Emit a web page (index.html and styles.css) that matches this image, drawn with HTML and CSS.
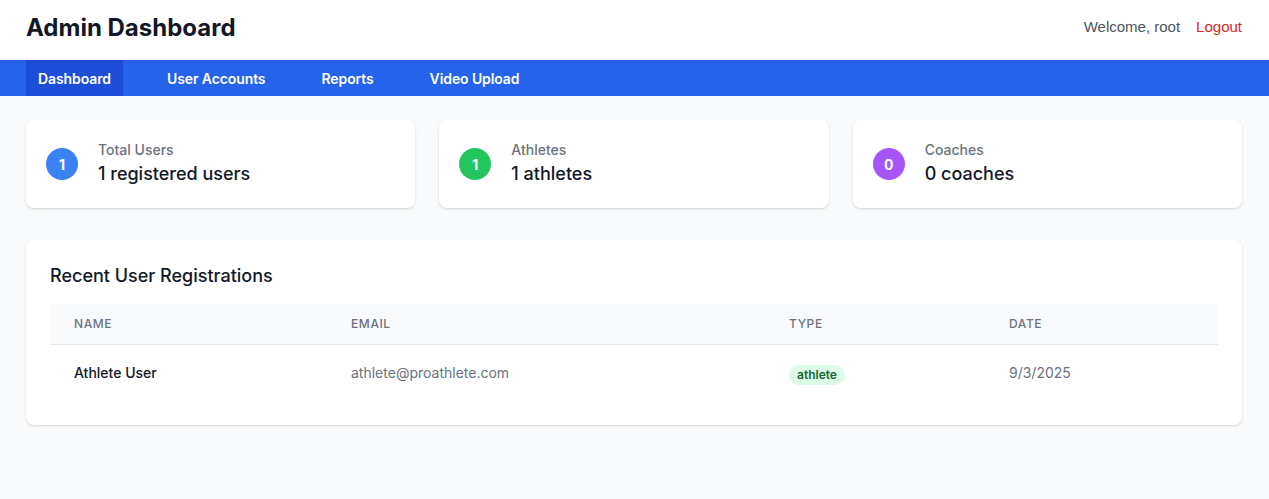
FILE: index.html
```html
<!DOCTYPE html>
<html>
<head>
<meta charset="utf-8">
<link rel="stylesheet" href="styles.css">
</head>
<body>
<header class="topbar">
  <div class="container topbar-inner">
    <h1 class="title">Admin Dashboard</h1>
    <div class="user-area">
      <span class="welcome">Welcome, root</span>
      <button class="logout">Logout</button>
    </div>
  </div>
</header>
<nav class="nav">
  <div class="container nav-inner">
    <a class="nav-item active">Dashboard</a>
    <a class="nav-item">User Accounts</a>
    <a class="nav-item">Reports</a>
    <a class="nav-item">Video Upload</a>
  </div>
</nav>
<main class="container main">
  <div class="stats">
    <div class="card stat">
      <div class="dot blue">1</div>
      <div class="stat-text">
        <div class="stat-label">Total Users</div>
        <div class="stat-value">1 registered users</div>
      </div>
    </div>
    <div class="card stat">
      <div class="dot green">1</div>
      <div class="stat-text">
        <div class="stat-label">Athletes</div>
        <div class="stat-value">1 athletes</div>
      </div>
    </div>
    <div class="card stat">
      <div class="dot purple">0</div>
      <div class="stat-text">
        <div class="stat-label">Coaches</div>
        <div class="stat-value">0 coaches</div>
      </div>
    </div>
  </div>
  <div class="card recent">
    <h2 class="recent-title">Recent User Registrations</h2>
    <table class="table">
      <thead>
        <tr>
          <th class="c1">Name</th>
          <th class="c2">Email</th>
          <th class="c3">Type</th>
          <th class="c4">Date</th>
        </tr>
      </thead>
      <tbody>
        <tr>
          <td class="name">Athlete User</td>
          <td class="muted">athlete@proathlete.com</td>
          <td><span class="badge">athlete</span></td>
          <td class="muted">9/3/2025</td>
        </tr>
      </tbody>
    </table>
  </div>
</main>
</body>
</html>
```
FILE: styles.css
```css
* { box-sizing: border-box; }
html, body { margin: 0; padding: 0; }
body {
  background: #f9fafb;
  font-family: Inter, "Noto Sans", sans-serif;
  color: #111827;
}
.container { padding: 0 27px 0 26px; }
.topbar {
  background: #fff;
  box-shadow: 0 1px 2px rgba(0,0,0,0.06);
  position: relative;
  z-index: 1;
}
.topbar-inner {
  height: 60px;
  display: flex;
  align-items: center;
  justify-content: space-between;
}
.title {
  margin: 0;
  font-size: 24px;
  font-weight: 700;
  line-height: 32px;
  color: #111827;
  position: relative;
  top: -2px;
}
.user-area {
  display: flex;
  align-items: center;
  gap: 16px;
  font-family: "Liberation Sans", Arial, sans-serif;
  font-size: 15px;
  position: relative;
  top: -4px;
}
.welcome { color: #4b5563; }
.logout {
  border: none;
  background: none;
  padding: 0;
  font: inherit;
  color: #dc2626;
}
.nav { background: #2563eb; }
.nav-inner {
  display: flex;
  gap: 32px;
  height: 36px;
}
.nav-item {
  display: flex;
  align-items: center;
  padding: 0 12px;
  color: #fff;
  font-size: 14px;
  font-weight: 600;
  letter-spacing: -0.1px;
}
.nav-item.active { background: #1d4ed8; }
.main { padding-top: 24px; padding-bottom: 24px; }
.card {
  background: #fff;
  border-radius: 8px;
  box-shadow: 0 1px 3px rgba(0,0,0,0.1), 0 1px 2px rgba(0,0,0,0.06);
}
.stats {
  display: grid;
  grid-template-columns: repeat(3, 1fr);
  gap: 24px;
}
.stat {
  display: flex;
  align-items: center;
  padding: 20px;
}
.dot {
  width: 32px;
  height: 32px;
  border-radius: 50%;
  color: #fff;
  font-size: 14px;
  font-weight: 700;
  display: flex;
  align-items: center;
  justify-content: center;
  flex-shrink: 0;
}
.blue { background: #3b82f6; }
.green { background: #22c55e; }
.purple { background: #a855f7; }
.stat-text { margin-left: 20px; }
.stat-label {
  font-size: 14px;
  line-height: 20px;
  color: #6b7280;
  font-weight: 500;
}
.stat-value {
  font-size: 18px;
  line-height: 28px;
  font-weight: 500;
  color: #111827;
}
.recent {
  margin-top: 32px;
  padding: 24px;
}
.recent-title {
  margin: 0 0 16px;
  font-size: 18px;
  line-height: 24px;
  font-weight: 500;
  color: #111827;
}
.table {
  width: 100%;
  border-collapse: collapse;
  table-layout: fixed;
}
.c1 { width: 277px; }
.c2 { width: 438px; }
.c3 { width: 220px; }
thead tr { background: #f9fafb; border-bottom: 1px solid #e5e7eb; }
th {
  text-align: left;
  padding: 0 24px;
  height: 40px;
  font-size: 12px;
  font-weight: 500;
  color: #6b7280;
  text-transform: uppercase;
  letter-spacing: 0.05em;
}
td {
  padding: 16px 24px;
  font-size: 14px;
  line-height: 20px;
  height: 57px;
  white-space: nowrap;
}
.name { font-weight: 500; color: #111827; }
.muted { color: #6b7280; }
.badge {
  display: inline-block;
  padding: 0 8px;
  border-radius: 9999px;
  background: #dcfce7;
  color: #166534;
  font-size: 12px;
  font-weight: 600;
  line-height: 20px;
  position: relative;
  top: 2px;
}
```
